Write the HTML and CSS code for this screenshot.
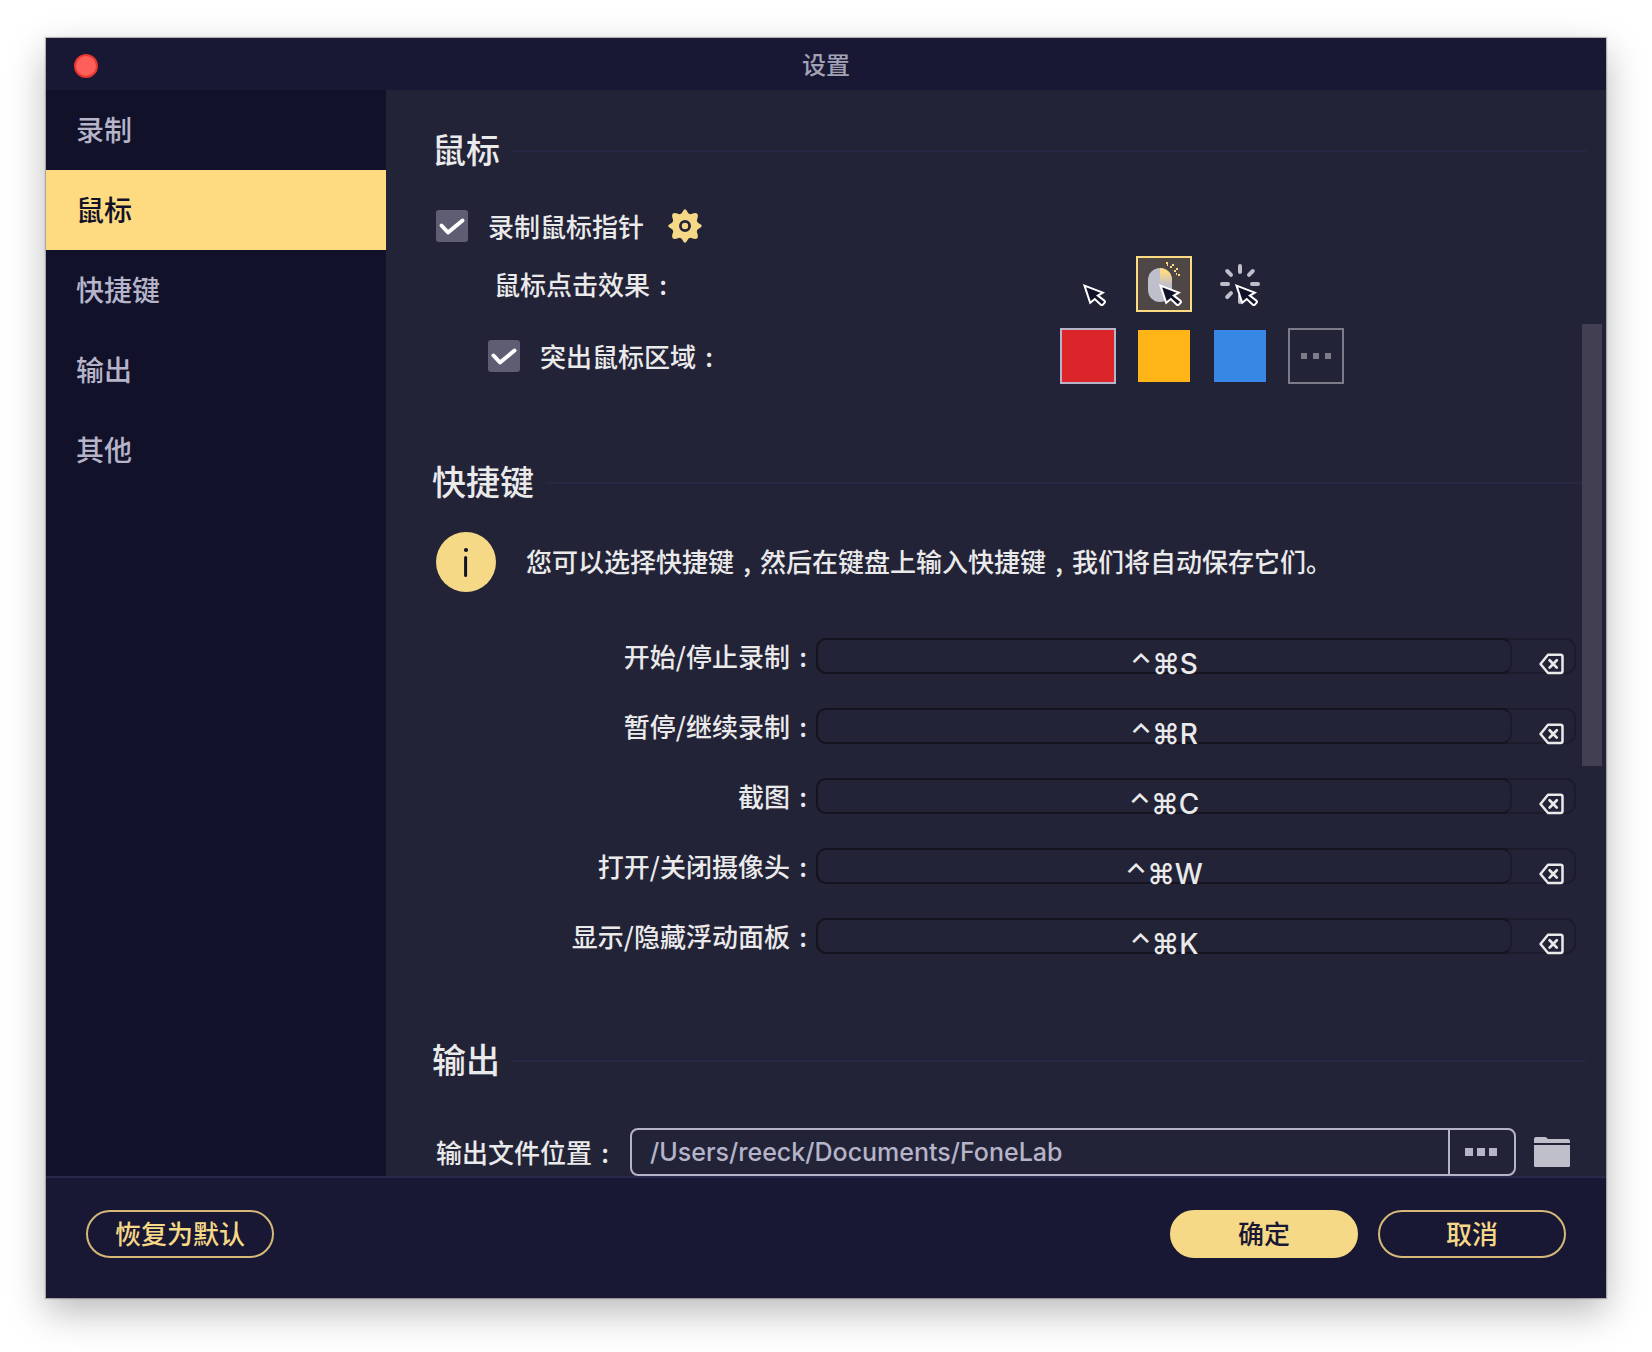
FILE: index.html
```html
<!DOCTYPE html>
<html lang="zh-CN">

<head>
	<meta charset="utf-8">
	<title>设置</title>
	<link rel="stylesheet" href="styles.css">
</head>

<body>
	<svg class="defs" width="0" height="0" aria-hidden="true">
		<symbol id="cursor" viewBox="0 0 56 56">
			<path d="M24.5 29.6L42.8 36.6L37.8 39.6L44.3 44.6Q45.6 45.8 44.4 47L43 48.400Q41.8 49.5 40.6 48.400L34.8 43L30.2 46.8Z" fill="#11112a" stroke="#fff" stroke-width="2" />
		</symbol>
		<symbol id="backspace" viewBox="0 0 26 22">
			<path d="M9 1.8H21.5Q23.5 1.8 23.5 3.8V18Q23.5 20 21.5 20H9L1.5 11Z" fill="none" stroke="#eaeaea" stroke-width="2.5" stroke-linejoin="round" />
			<path d="M10.6 7.2L17.8 14.6M17.8 7.2L10.6 14.6" stroke="#eaeaea" stroke-width="2.7" stroke-linecap="round" />
		</symbol>
	</svg>

	<div class="window">
		<header class="titlebar">
			<button class="close" aria-label="关闭"></button>
			<h1>设置</h1>
		</header>

		<div class="body">
			<nav class="sidebar">
				<a href="#record">录制</a>
				<a href="#mouse" class="active">鼠标</a>
				<a href="#shortcuts">快捷键</a>
				<a href="#output">输出</a>
				<a href="#other">其他</a>
			</nav>

			<main>
				<section id="mouse">
					<h2>鼠标</h2>
					<div class="option">
						<input type="checkbox" id="pointer" class="check" checked>
						<label for="pointer">录制鼠标指针</label>
						<button class="gear" aria-label="指针设置">
							<svg width="34" height="34" viewBox="0 0 34 34">
								<path d="M14.8 2.6Q17 -2.2 19.2 2.6Q20.8 6.4 24.6 4.6Q31.5 2.500 29.4 9.4Q27.6 13.2 31.4 14.8Q36.2 17 31.4 19.2Q27.6 20.8 29.4 24.6Q31.5 31.5 24.6 29.4Q20.8 27.6 19.2 31.4Q17 36.2 14.8 31.4Q13.2 27.6 9.4 29.4Q2.500 31.5 4.6 24.6Q6.4 20.8 2.6 19.2Q-2.2 17 2.6 14.8Q6.4 13.2 4.6 9.4Q2.500 2.500 9.4 4.6Q13.2 6.4 14.8 2.6Z" fill="#f6d987" />
								<circle cx="17" cy="17" r="4.6" fill="#f6d987" stroke="#232338" stroke-width="2.8" />
							</svg>
						</button>
					</div>
					<div class="choice">
						<span class="choice-label" id="effectLabel">鼠标点击效果<span class="colon">:</span></span>
						<div class="tiles" role="radiogroup" aria-labelledby="effectLabel">
							<label class="effect">
								<input type="radio" name="effect" aria-label="无">
								<svg width="56" height="56" viewBox="0 0 56 56"><use href="#cursor" /></svg>
							</label>
							<label class="effect">
								<input type="radio" name="effect" aria-label="点击" checked>
								<svg width="56" height="56" viewBox="0 0 56 56">
									<linearGradient id="press" x1="0" y1="0" x2="0" y2="1">
										<stop offset="0.2" stop-color="#fedb80" />
										<stop offset="1" stop-color="#bfbfcb" />
									</linearGradient>
									<rect x="12" y="12" width="24" height="34" rx="12" fill="#bfbfcb" />
									<path d="M24 12A12 12 0 0 1 36 24V29H24Z" fill="url(#press)" />
									<path d="M30 6h2v2h-2zM31 8h1v2h-1zM36 8h2v2h-2zM34 10h2v2h-2zM40 12h2v2h-2zM38 14h2v2h-2zM42 18h2v2h-2zM40 17h1v2h-1z" fill="#fedb80" />
									<use href="#cursor" />
								</svg>
							</label>
							<label class="effect">
								<input type="radio" name="effect" aria-label="光芒">
								<svg width="56" height="56" viewBox="0 0 56 56">
									<path d="M28 10V16M28 40V46M10 28H16M40 28H46M15.2 15L19 18.8M40.8 15L37 18.8M15.2 41L19 37.2" stroke="#bfbfcb" stroke-width="4" stroke-linecap="round" />
									<use href="#cursor" />
								</svg>
							</label>
						</div>
					</div>
					<div class="choice">
						<div class="option nested">
							<input type="checkbox" id="area" class="check" checked>
							<label for="area">突出鼠标区域<span class="colon">:</span></label>
						</div>
						<div class="tiles">
							<input type="radio" name="color" class="swatch red" aria-label="红色" checked>
							<input type="radio" name="color" class="swatch yellow" aria-label="黄色">
							<input type="radio" name="color" class="swatch blue" aria-label="蓝色">
							<button class="more" aria-label="更多颜色"><i></i><i></i><i></i></button>
						</div>
					</div>
				</section>

				<section id="shortcuts">
					<h2>快捷键</h2>
					<div class="info">
						<svg width="60" height="60" viewBox="0 0 60 60">
							<circle cx="30" cy="30" r="30" fill="#f6d987" />
							<circle cx="30" cy="18" r="2.1" fill="#11112a" />
							<path d="M29.6 25.5V43.5" stroke="#11112a" stroke-width="3" stroke-linecap="round" />
						</svg>
						<p>您可以选择快捷键<span class="comma">,</span>然后在键盘上输入快捷键<span class="comma">,</span>我们将自动保存它们。</p>
					</div>
					<div class="shortcuts">
						<label for="keyStart">开始/停止录制<span class="colon">:</span></label>
						<div class="keys">
							<div class="field"><input type="text" id="keyStart" value="⌃⌘S" readonly></div>
							<button aria-label="清除"><svg width="26" height="22"><use href="#backspace" /></svg></button>
						</div>
						<label for="keyPause">暂停/继续录制<span class="colon">:</span></label>
						<div class="keys">
							<div class="field"><input type="text" id="keyPause" value="⌃⌘R" readonly></div>
							<button aria-label="清除"><svg width="26" height="22"><use href="#backspace" /></svg></button>
						</div>
						<label for="keyShot">截图<span class="colon">:</span></label>
						<div class="keys">
							<div class="field"><input type="text" id="keyShot" value="⌃⌘C" readonly></div>
							<button aria-label="清除"><svg width="26" height="22"><use href="#backspace" /></svg></button>
						</div>
						<label for="keyCamera">打开/关闭摄像头<span class="colon">:</span></label>
						<div class="keys">
							<div class="field"><input type="text" id="keyCamera" value="⌃⌘W" readonly></div>
							<button aria-label="清除"><svg width="26" height="22"><use href="#backspace" /></svg></button>
						</div>
						<label for="keyPanel">显示/隐藏浮动面板<span class="colon">:</span></label>
						<div class="keys">
							<div class="field"><input type="text" id="keyPanel" value="⌃⌘K" readonly></div>
							<button aria-label="清除"><svg width="26" height="22"><use href="#backspace" /></svg></button>
						</div>
					</div>
				</section>

				<section id="output">
					<h2>输出</h2>
					<div class="location">
						<label for="path">输出文件位置<span class="colon">:</span></label>
						<div class="path">
							<input type="text" id="path" value="/Users/reeck/Documents/FoneLab">
							<button aria-label="浏览"><i></i><i></i><i></i></button>
						</div>
						<button class="folder" aria-label="打开文件夹">
							<svg width="36" height="30" viewBox="0 0 36 30">
								<path d="M0 6V2Q0 0 2 0H11Q12.5 0 14 2H34Q36 2 36 4V6Z" fill="#bfbfcb" />
								<path d="M0 8H36V28.5Q36 30 34.5 30H1.5Q0 30 0 28.5Z" fill="#bfbfcb" />
							</svg>
						</button>
					</div>
				</section>
				<div class="scrollbar"></div>
			</main>
		</div>

		<footer>
			<button class="btn reset">恢复为默认</button>
			<button class="btn primary">确定</button>
			<button class="btn">取消</button>
		</footer>
	</div>
</body>

</html>
```
FILE: styles.css
```css
* {
	box-sizing: border-box;
}

body {
	display: flex;
	min-height: 100vh;
	margin: 0;
	padding: 38px 46px 54px;
	background-color: white;
	color: #eaeaea;
	font-family: "Noto Sans CJK SC", sans-serif;
	font-size: 26px;
	font-weight: 500;
	line-height: 36px;
}

button,
input {
	margin: 0;
	padding: 0;
	border: none;
	background: none;
	color: inherit;
	font: inherit;
}

button svg,
label svg {
	display: block;
}

.defs {
	position: absolute;
}

.window {
	display: flex;
	flex: 1;
	flex-direction: column;
	min-width: 0;
	background-color: #232338;
	box-shadow: 0 0 1px 1px rgba(0, 0, 0, 0.25), 0 14px 36px rgba(0, 0, 0, 0.28);
}

/* title bar */
.titlebar {
	display: grid;
	grid-template-columns: 1fr auto 1fr;
	align-items: center;
	height: 52px;
	padding: 0 28px;
	background-color: #191834;
}

.close {
	width: 24px;
	height: 24px;
	margin-top: 4px;
	border: 2px solid #e8362f;
	border-radius: 50%;
	background-color: #ff5f5a;
}

h1 {
	margin: 0;
	color: #a3a2b5;
	font-size: 24px;
	font-weight: 500;
}

.body {
	display: flex;
	flex: 1;
}

/* sidebar */
.sidebar {
	flex: 0 0 340px;
	background-color: #11112a;
}

.sidebar a {
	display: block;
	padding: 0 30px 2px;
	color: #b5b4c8;
	font-size: 28px;
	line-height: 78px;
	text-decoration: none;
}

.sidebar a.active {
	background-color: #fedb80;
	color: #11112a;
}

/* settings */
main {
	position: relative;
	flex: 1;
	min-width: 0;
	padding: 38px 20px 0 46px;
}

h2 {
	display: flex;
	align-items: center;
	gap: 12px;
	margin: 0;
	font-size: 34px;
	font-weight: 500;
	line-height: 42px;
}

h2::after {
	content: "";
	flex: 1;
	height: 2px;
	margin-top: 4px;
	background-color: #282845;
}

/* punctuation is centred in a full-width cell */
.colon,
.comma {
	display: inline-block;
	width: 26px;
	text-align: center;
}

.option {
	display: flex;
	align-items: center;
	gap: 20px;
	padding-left: 4px;
}

#mouse > .option {
	margin: 38px 0 12px;
}

.option.nested {
	padding-left: 56px;
}

.check {
	appearance: none;
	width: 32px;
	height: 32px;
	border-radius: 3px;
	background-color: #5e5d73;
}

.check:checked {
	background-image: url("data:image/svg+xml,%3Csvg xmlns='http://www.w3.org/2000/svg' viewBox='0 0 32 32'%3E%3Cpath d='M5.500 15.500L12 22.500L26.500 10.500' fill='none' stroke='white' stroke-width='4' stroke-linecap='round' stroke-linejoin='round'/%3E%3C/svg%3E");
}

.gear {
	padding-left: 4px;
}

.choice {
	display: grid;
	grid-template-columns: 628px 1fr;
	align-items: center;
}

.choice + .choice {
	margin-top: 16px;
}

.choice-label {
	padding-left: 62px;
}

.tiles {
	display: flex;
	gap: 20px;
}

.effect {
	width: 56px;
	height: 56px;
}

.effect:has(input:checked) {
	background-color: #4e4745;
	box-shadow: inset 0 0 0 2px #fedb80;
}

.effect input {
	position: absolute;
	opacity: 0;
}

.swatch {
	appearance: none;
	width: 56px;
	height: 56px;
	border: 2px solid transparent;
	background-clip: padding-box;
}

.swatch:checked {
	border-color: #b5b4c8;
}

.red {
	background-color: #db252b;
}

.yellow {
	background-color: #ffb518;
}

.blue {
	background-color: #3788e4;
}

.more {
	display: flex;
	align-items: center;
	justify-content: center;
	gap: 6px;
	width: 56px;
	height: 56px;
	border: 2px solid #7c7b89;
}

.more i {
	width: 6px;
	height: 6px;
	background-color: #7c7b89;
}

/* shortcuts */
#shortcuts {
	margin-top: 76px;
}

.info {
	display: flex;
	align-items: center;
	gap: 30px;
	margin: 30px 0 46px 4px;
}

.info p {
	margin: 0;
	padding-bottom: 2px;
}

.shortcuts {
	display: grid;
	grid-template-columns: 384px 1fr;
	row-gap: 34px;
	margin-right: 10px;
	text-align: right;
}

.keys {
	display: flex;
	height: 36px;
	border-radius: 10px;
	box-shadow: inset 0 0 0 2px #1c1b2c;
}

.field {
	flex: 1;
	height: 36px;
	border: 2px solid #1c1b2c;
	border-top-color: #14131f;
	border-bottom-color: #14131f;
	border-left-color: #14131f;
	border-radius: 10px;
}

/* the key text hangs on the lower border of its box */
.keys input {
	width: 100%;
	height: 48px;
	font-family: Inter, "DejaVu Sans", sans-serif;
	font-size: 28px;
	text-align: center;
}

.keys button {
	width: 64px;
	height: 52px;
	padding-left: 27px;
}

/* output */
#output {
	margin-top: 84px;
}

.location {
	display: flex;
	align-items: center;
	margin: 48px 16px 0 4px;
}

.path {
	display: flex;
	flex: 1;
	height: 48px;
	margin: 0 18px 0 12px;
	border: 2px solid #b5b4c8;
	border-radius: 8px;
}

.path input {
	flex: 1;
	min-width: 0;
	padding-left: 18px;
	color: #b5b4c8;
	font-family: Inter, sans-serif;
	font-size: 25px;
}

.path button {
	display: flex;
	align-items: center;
	justify-content: center;
	gap: 4px;
	width: 66px;
	padding-right: 2px;
	border-left: 2px solid #b5b4c8;
}

.path i {
	width: 8px;
	height: 8px;
	background-color: #b5b4c8;
}

.scrollbar {
	position: absolute;
	top: 234px;
	right: 4px;
	width: 20px;
	height: 442px;
	background-color: #413f51;
}

/* footer */
footer {
	display: flex;
	gap: 20px;
	padding: 32px 40px 40px;
	border-top: 2px solid #29284b;
	background-color: #191834;
}

.btn {
	width: 188px;
	height: 48px;
	padding-bottom: 2px;
	border: 2px solid #d6b978;
	border-radius: 24px;
	color: #f6d987;
}

.reset {
	margin-right: auto;
}

.primary {
	border-color: #f6d987;
	background-color: #f6d987;
	color: #191834;
}
```
